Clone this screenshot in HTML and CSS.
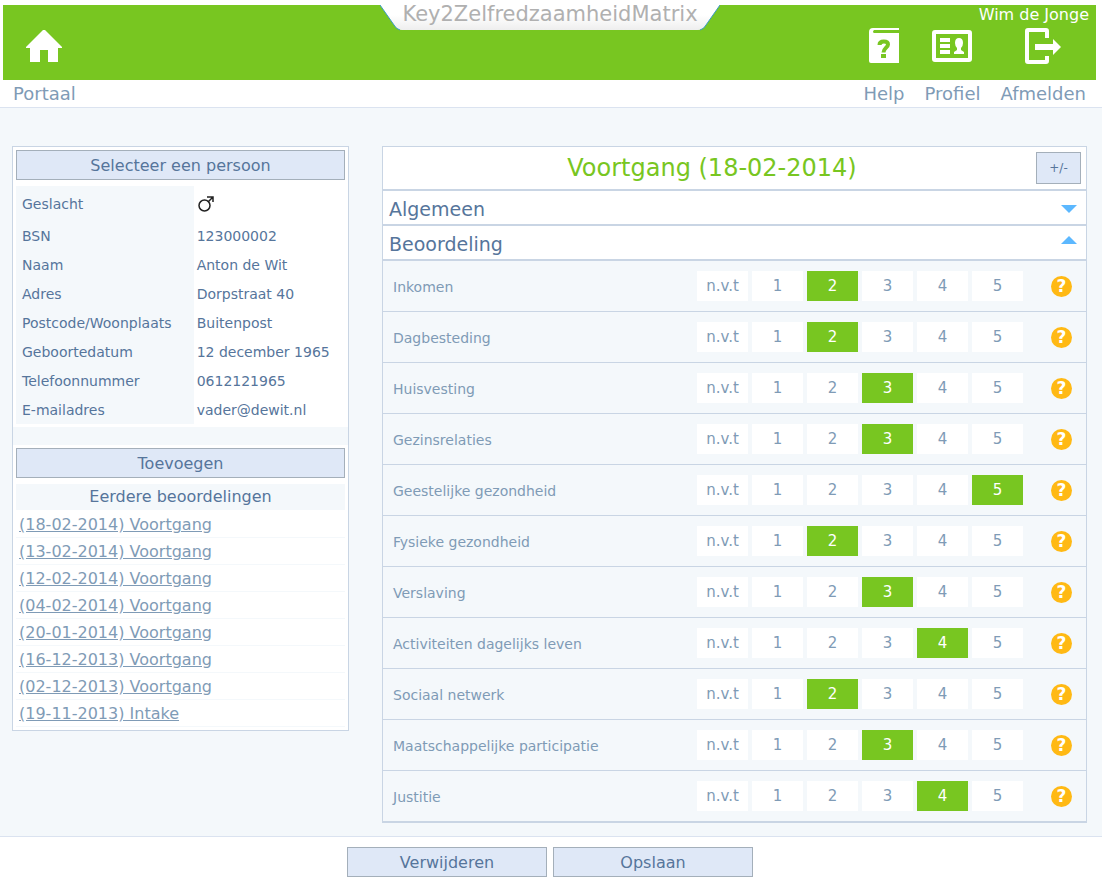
FILE: index.html
```html
<!DOCTYPE html>
<html lang="nl">
<head>
<meta charset="utf-8">
<meta name="viewport" content="width=device-width, initial-scale=1">
<title>Key2ZelfredzaamheidMatrix</title>
<link rel="stylesheet" href="styles.css">
</head>
<body>
<header class="top">
  <h1 class="tab">
    <svg class="tab-shape" viewBox="0 0 340 26" aria-hidden="true">
      <defs><linearGradient id="fade" x1="0" y1="0" x2="0" y2="1"><stop offset=".4" stop-color="#fff"/><stop offset="1" stop-color="#eee"/></linearGradient></defs>
      <path d="M0 0 14 20Q17 25 22 25H318Q323 25 326 20L340 0Z" fill="url(#fade)"/>
      <path d="M0 0 14 20Q16 24 20 25M320 25Q324 24 326 20L340 0" fill="none" stroke="#3a9bc4"/>
    </svg>
    <span class="tab-text">Key2ZelfredzaamheidMatrix</span>
  </h1>
  <span class="user">Wim de Jonge</span>
  <nav class="nav">
    <a class="nav-link" href="#portaal">
      <svg class="nav-icon" viewBox="0 0 40 40" aria-hidden="true"><path d="M19 4H21L38 21V22H34V36H24V24H16V36H6V22H2V21Z" fill="#fff"/></svg>
      Portaal
    </a>
    <a class="nav-link nav-first" href="#help">
      <svg class="nav-icon" viewBox="0 0 40 40" aria-hidden="true"><path d="M9 2H35V4H10Q8 6 10 7H35V37H7Q5 37 5 35V6Q5 2 9 2Z" fill="#fff"/><path d="M15.500 19Q15.500 15.500 19.800 15.500Q24 15.500 24 18.500C24 21.500 19.500 22 19.500 26.500" fill="none" stroke="#78c621" stroke-width="4"/><path d="M17 28H22V32H17Z" fill="#78c621"/></svg>
      Help
    </a>
    <a class="nav-link" href="#profiel">
      <svg class="nav-icon" viewBox="0 0 40 40" aria-hidden="true"><rect x="2" y="6" width="36" height="28" rx="1" fill="none" stroke="#fff" stroke-width="4"/><path d="M8 12H18V16H8ZM8 18H18V22H8ZM8 24H18V28H8ZM27 12Q31 12 31 17Q31 20 29 22V24L32 26V28H22V26L25 24V22Q23 20 23 17Q23 12 27 12Z" fill="#fff"/></svg>
      Profiel
    </a>
    <a class="nav-link" href="#afmelden">
      <svg class="nav-icon" viewBox="0 0 40 40" aria-hidden="true"><path d="M24 12V5Q24 4 23 4H5Q4 4 4 5V35Q4 36 5 36H23Q24 36 24 35V30" fill="none" stroke="#fff" stroke-width="4"/><path d="M12 18H30V13L38 21 30 29V24H12Z" fill="#fff"/></svg>
      Afmelden
    </a>
  </nav>
</header>

<main class="content">
  <aside class="panel person">
    <div class="block">
      <button class="btn" type="button">Selecteer een persoon</button>
      <table class="details">
        <tr class="gender"><th scope="row">Geslacht</th><td><svg class="male" viewBox="0 0 18 18" role="img" aria-label="Man"><circle cx="7.500" cy="9.500" r="5.500"/><path d="M11.500 5.500 15.500 1.500M10 1H16V6"/></svg></td></tr>
        <tr><th scope="row">BSN</th><td>123000002</td></tr>
        <tr><th scope="row">Naam</th><td>Anton de Wit</td></tr>
        <tr><th scope="row">Adres</th><td>Dorpstraat 40</td></tr>
        <tr><th scope="row">Postcode/Woonplaats</th><td>Buitenpost</td></tr>
        <tr><th scope="row">Geboortedatum</th><td>12 december 1965</td></tr>
        <tr><th scope="row">Telefoonnummer</th><td>0612121965</td></tr>
        <tr><th scope="row">E-mailadres</th><td>vader@dewit.nl</td></tr>
      </table>
    </div>
    <div class="block history">
      <button class="btn" type="button">Toevoegen</button>
      <div>
        <h2 class="history-title">Eerdere beoordelingen</h2>
        <ul class="history-list">
          <li><a href="#b8">(18-02-2014) Voortgang</a></li>
          <li><a href="#b7">(13-02-2014) Voortgang</a></li>
          <li><a href="#b6">(12-02-2014) Voortgang</a></li>
          <li><a href="#b5">(04-02-2014) Voortgang</a></li>
          <li><a href="#b4">(20-01-2014) Voortgang</a></li>
          <li><a href="#b3">(16-12-2013) Voortgang</a></li>
          <li><a href="#b2">(02-12-2013) Voortgang</a></li>
          <li><a href="#b1">(19-11-2013) Intake</a></li>
        </ul>
      </div>
    </div>
  </aside>

  <section class="panel review">
    <div class="review-head">
      <h2 class="review-title">Voortgang (18-02-2014)</h2>
      <button class="toggle-all" type="button">+/-</button>
    </div>
    <button class="section" type="button" aria-expanded="false">Algemeen<svg class="arrow" viewBox="0 0 16 8" aria-hidden="true"><path d="M0 0H16L8 8Z"/></svg></button>
    <button class="section" type="button" aria-expanded="true">Beoordeling<svg class="arrow arrow-up" viewBox="0 0 16 8" aria-hidden="true"><path d="M0 8H16L8 0Z"/></svg></button>
    <div class="rows" id="rows"></div>
  </section>
</main>

<footer class="actions">
  <button class="btn action" type="button">Verwijderen</button>
  <button class="btn action" type="button">Opslaan</button>
</footer>
<script src="ratings.js"></script>
</body>
</html>
```
FILE: ratings.js
```js
const ratings = [
  ["Inkomen", "2"],
  ["Dagbesteding", "2"],
  ["Huisvesting", "3"],
  ["Gezinsrelaties", "3"],
  ["Geestelijke gezondheid", "5"],
  ["Fysieke gezondheid", "2"],
  ["Verslaving", "3"],
  ["Activiteiten dagelijks leven", "4"],
  ["Sociaal netwerk", "2"],
  ["Maatschappelijke participatie", "3"],
  ["Justitie", "4"]
];
const scores = ["n.v.t", "1", "2", "3", "4", "5"];

document.getElementById("rows").innerHTML = ratings.map(([name, chosen], i) => `
  <div class="row" role="radiogroup" aria-labelledby="domain-${i}">
    <span class="domain" id="domain-${i}">${name}</span>
    <div class="scores">
      ${scores.map(s => `<label class="score"><input class="score-input" type="radio" name="score-${i}" value="${s}"${s === chosen ? " checked" : ""}>${s}</label>`).join("")}
    </div>
    <button class="help" type="button" aria-label="Uitleg ${name}">?</button>
  </div>`).join("");
```
FILE: styles.css
```css
* { box-sizing: border-box; }

body {
  margin: 0;
  min-height: 100vh;
  display: flex;
  flex-direction: column;
  font-family: Verdana, "DejaVu Sans", sans-serif;
  font-size: 16px;
  color: #56759b;
  background: #fff;
}

h1, h2 { margin: 0; font-weight: normal; }
button { font-family: inherit; color: inherit; cursor: pointer; }

/* Header */
.top {
  position: relative;
  padding: 26px 16px 0 13px;
  border-bottom: 1px solid #dbe3f0;
  background: linear-gradient(#78c621, #78c621) 3px 5px / calc(100% - 9px) 75px no-repeat;
}
.tab {
  position: absolute;
  top: 5px;
  left: 50%;
  width: 340px;
  height: 26px;
  margin-left: -171px;
  font-size: 21px;
  line-height: 18px;
  text-align: center;
  color: #b0b0b0;
}
.tab-shape { position: absolute; inset: 0; width: 100%; height: 100%; }
.tab-text { position: relative; }
.user {
  position: absolute;
  top: 5px;
  right: 13px;
  font-size: 16px;
  line-height: 20px;
  color: #fff;
}
.nav { display: flex; gap: 20px; }
.nav-link {
  display: flex;
  flex-direction: column;
  align-items: center;
  gap: 17px;
  padding-bottom: 2px;
  font-size: 18px;
  line-height: 22px;
  color: #7f9bb6;
  text-decoration: none;
}
.nav-first { margin-left: auto; }
.nav-icon { width: 40px; height: 40px; }

/* Content */
.content {
  flex: 1;
  display: grid;
  grid-template-columns: 337fr 705fr;
  gap: 33px;
  align-items: start;
  padding: 38px 15px 13px 12px;
  background: #f4f8fb;
}
.panel { border: 1px solid #c9d5e4; }
.block {
  display: flex;
  flex-direction: column;
  gap: 6px;
  padding: 3px;
  background: #fff;
}
.history { margin-top: 18px; }
.btn {
  height: 30px;
  padding: 0;
  border: 1px solid #a4afba;
  background: #dfe8f7;
  font-size: 16px;
}

.details { width: 100%; border-collapse: collapse; font-size: 14px; line-height: 19px; }
.details th, .details td { height: 29px; padding: 6px 3px 4px; text-align: left; font-weight: normal; }
.details th { width: 54%; padding-left: 6px; background: #f4f8fb; }
.details .gender th, .details .gender td { height: 35px; }
.male { display: block; width: 18px; height: 18px; fill: none; stroke: #222; stroke-width: 1.5; }

.history-title { font-size: 16px; line-height: 26px; text-align: center; background: #f4f8fb; }
.history-list { margin: 0; padding: 1px 0 0; list-style: none; }
.history-list li { padding: 1px 3px 0; border-bottom: 1px solid #f4f8fb; line-height: 25px; }
.history-list a { color: #7f9bb6; }

/* Review */
.review-head {
  display: flex;
  align-items: center;
  padding: 5px;
  border-bottom: 2px solid #c9d5e4;
  background: #fff;
}
.review-title { flex: 1; font-size: 24px; line-height: 32px; text-align: center; color: #78c621; }
.toggle-all {
  width: 45px;
  height: 32px;
  padding: 0;
  border: 1px solid #a4afba;
  background: #dfe8f7;
  font-size: 12px;
}
.section {
  display: flex;
  justify-content: space-between;
  align-items: center;
  width: 100%;
  height: 35px;
  padding: 2px 9px 0 6px;
  border: 0;
  border-bottom: 2px solid #c9d5e4;
  background: #fff;
  font-size: 19px;
  text-align: left;
}
.arrow { width: 16px; height: 8px; fill: #5cb8ff; }
.arrow-up { margin-bottom: 8px; }

.row {
  display: flex;
  align-items: center;
  padding: 10px 14px 10px 10px;
  border-bottom: 1px solid #c9d5e4;
}
.domain { flex: 1; padding-top: 2px; font-size: 14px; color: #7f9bb6; }
.scores { display: flex; gap: 4px; margin-right: 28px; }
.score {
  position: relative;
  width: 51px;
  padding-top: 1px;
  font-size: 15px;
  line-height: 29px;
  text-align: center;
  color: #7f9bb6;
  background: #fff;
  cursor: pointer;
}
.score:has(:checked) { color: #fff; background: #78c621; }
.score-input { position: absolute; inset: 0; margin: 0; opacity: 0; }
.help {
  width: 21px;
  height: 21px;
  padding: 0;
  border: 0;
  border-radius: 50%;
  background: #ffb914;
  color: #fff;
  font-size: 17px;
  font-weight: bold;
  line-height: 21px;
}

/* Footer */
.actions {
  display: flex;
  justify-content: center;
  gap: 6px;
  padding: 10px 2px 6px 0;
  border-top: 1px solid #dbe3f0;
}
.action { width: 200px; }
```
